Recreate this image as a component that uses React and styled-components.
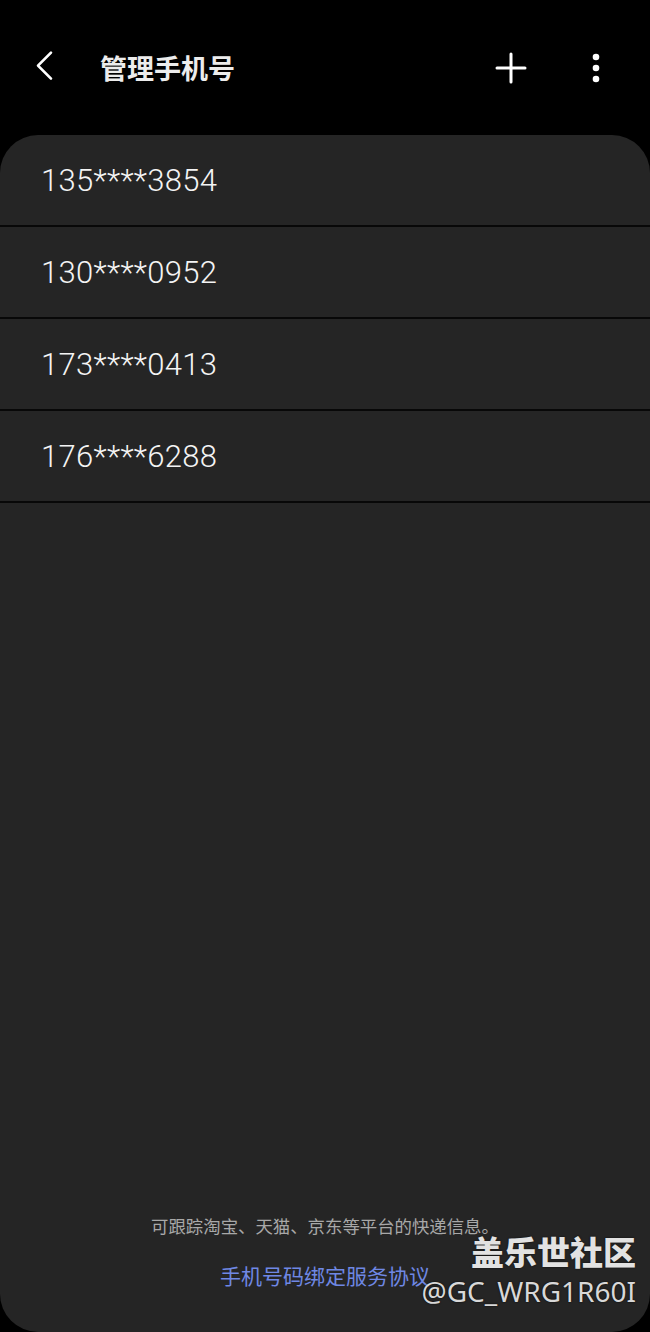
import React from "react";
import styled, { createGlobalStyle } from "styled-components";

const Global = createGlobalStyle`
  html, body {
    margin: 0;
    padding: 0;
    background: #000;
  }
  body {
    font-family: "Roboto", "Noto Sans CJK SC", sans-serif;
  }
`;

const Screen = styled.div`
  position: relative;
  width: 650px;
  height: 1332px;
  background: #000;
  display: flex;
  flex-direction: column;
  overflow: hidden;
`;

const TopBar = styled.div`
  height: 135px;
  display: flex;
  align-items: center;
  padding: 0 0 0 26px;
  box-sizing: border-box;
`;

const IconButton = styled.div`
  width: ${(p) => p.w || 40}px;
  height: 40px;
  display: flex;
  align-items: center;
  justify-content: center;
  color: #fff;
`;

const Title = styled.h1`
  margin: 0 0 0 34px;
  flex: 1;
  font-family: "Noto Sans CJK SC", sans-serif;
  font-size: 27px;
  font-weight: 700;
  color: #ececec;
  letter-spacing: 0;
`;

const Actions = styled.div`
  display: flex;
  align-items: center;
  gap: 55px;
  margin-right: 44px;
`;

const Panel = styled.div`
  flex: 1;
  background: #252525;
  border-radius: 38px;
  display: flex;
  flex-direction: column;
`;

const List = styled.div`
  display: flex;
  flex-direction: column;
`;

const Row = styled.div`
  height: 90px;
  display: flex;
  align-items: center;
  padding-left: 41px;
  border-bottom: 2px solid #080808;
  font-family: "Roboto", sans-serif;
  font-size: 31px;
  font-weight: 300;
  color: #f4f4f4;
  letter-spacing: 0.3px;
`;

const Footer = styled.div`
  margin-top: auto;
  padding-bottom: 42px;
  display: flex;
  flex-direction: column;
  align-items: center;
  gap: 22px;
  font-family: "Noto Sans CJK SC", sans-serif;
`;

const Note = styled.div`
  font-size: 17.4px;
  color: #a8a8a8;
`;

const Link = styled.div`
  font-size: 21px;
  color: #6f88e4;
`;

const Watermark = styled.div`
  position: absolute;
  right: 14px;
  bottom: 22px;
  display: flex;
  flex-direction: column;
  align-items: flex-end;
  color: #e2e2e2;
  text-shadow: 0 0 2px rgba(0, 0, 0, 0.8);
`;

const MarkTitle = styled.div`
  font-family: "Noto Sans CJK SC", sans-serif;
  font-size: 33px;
  font-weight: 900;
  line-height: 42px;
  letter-spacing: 0;
`;

const MarkId = styled.div`
  font-family: "Noto Sans", sans-serif;
  font-size: 28px;
  line-height: 38px;
  color: #d8d8d8;
`;

const phones = ["135****3854", "130****0952", "173****0413", "176****6288"];

export default function App() {
  return (
    <Screen>
      <Global />
      <TopBar>
        <IconButton>
          <svg width="40" height="40" viewBox="0 0 40 40">
            <path d="M26 6 L13 20 L26 34" fill="none" stroke="#fff" strokeWidth="2.6" strokeLinecap="round" strokeLinejoin="round" transform="translate(-1 -1) scale(1 0.93)" />
          </svg>
        </IconButton>
        <Title>管理手机号</Title>
        <Actions>
          <IconButton>
            <svg width="32" height="32" viewBox="0 0 32 32">
              <path d="M16 2 V30 M2 16 H30" stroke="#fff" strokeWidth="3" strokeLinecap="round" />
            </svg>
          </IconButton>
          <IconButton w={20}>
            <svg width="10" height="32" viewBox="0 0 10 32">
              <circle cx="5" cy="5" r="3.3" fill="#fff" />
              <circle cx="5" cy="16" r="3.3" fill="#fff" />
              <circle cx="5" cy="27" r="3.3" fill="#fff" />
            </svg>
          </IconButton>
        </Actions>
      </TopBar>
      <Panel>
        <List>
          {phones.map((p) => (
            <Row key={p}>{p}</Row>
          ))}
        </List>
        <Footer>
          <Note>可跟踪淘宝、天猫、京东等平台的快递信息。</Note>
          <Link>手机号码绑定服务协议</Link>
        </Footer>
      </Panel>
      <Watermark>
        <MarkTitle>盖乐世社区</MarkTitle>
        <MarkId>@GC_WRG1R60I</MarkId>
      </Watermark>
    </Screen>
  );
}
